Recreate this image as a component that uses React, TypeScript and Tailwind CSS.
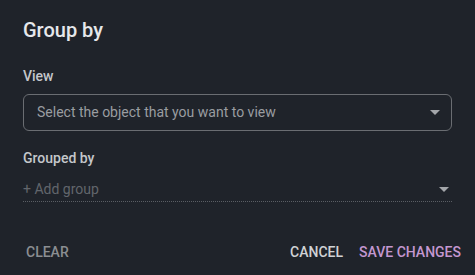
import React from "react";

function Caret() {
  return (
    <svg width="10" height="5" viewBox="0 0 10 5" className="shrink-0">
      <path d="M0 0 L10 0 L5 5 Z" fill="#a3a6aa" />
    </svg>
  );
}

export default function App() {
  return (
    <div
      className="w-[475px] h-[275px] bg-[#1f232a] flex flex-col overflow-hidden"
      style={{ fontFamily: "Roboto, 'Liberation Sans', sans-serif" }}
    >
      <div className="px-[23px] pt-[17px] h-[48px] text-[20px] leading-[26px] font-medium text-[#e6e8eb]">
        Group by
      </div>
      <div className="px-[23px] pt-[18px] flex flex-col">
        <div className="text-[14px] leading-[20px] font-medium text-[#c4c7cb]">View</div>
        <div className="mt-[8px] h-[37px] border border-[#6a6d72] rounded-[6px] flex items-center pl-[13px] pr-[11px]">
          <span className="flex-1 text-[14px] text-[#9a9da1]">Select the object that you want to view</span>
          <Caret />
        </div>
        <div className="mt-[17px] text-[14px] leading-[20px] font-medium text-[#c4c7cb]">Grouped by</div>
        <div className="mt-[11px] h-[23px] pb-[1px] flex items-center border-b border-dotted border-[#5a5e64] pr-[3px]">
          <span className="flex-1 text-[14px] text-[#62666c]">+ Add group</span>
          <Caret />
        </div>
      </div>
      <div className="mt-auto flex items-center pl-[18px] pr-[8px] pb-[6px] text-[14px] font-medium">
        <button className="uppercase px-[8px] py-[6px] text-[#8b8e92]">Clear</button>
        <div className="flex-1" />
        <button className="uppercase px-[8px] py-[6px] text-[#d0d2d5]">Cancel</button>
        <button className="uppercase ml-[2px] px-[6px] py-[6px] text-[#c497d0]">Save changes</button>
      </div>
    </div>
  );
}
